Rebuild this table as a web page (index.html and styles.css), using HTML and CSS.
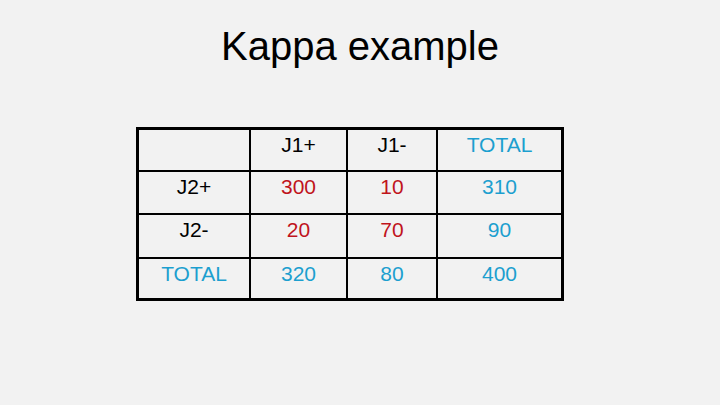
FILE: index.html
```html
<!DOCTYPE html>
<html lang="en">
<head>
<meta charset="utf-8">
<title>Kappa example</title>
<link rel="stylesheet" href="styles.css">
</head>
<body>
<main class="slide">
  <h1 class="title">Kappa example</h1>
  <div class="kappa">
    <div class="cell"></div>
    <div class="cell">J1+</div>
    <div class="cell">J1-</div>
    <div class="cell blue">TOTAL</div>

    <div class="cell">J2+</div>
    <div class="cell red">300</div>
    <div class="cell red">10</div>
    <div class="cell blue">310</div>

    <div class="cell">J2-</div>
    <div class="cell red">20</div>
    <div class="cell red">70</div>
    <div class="cell blue">90</div>

    <div class="cell blue">TOTAL</div>
    <div class="cell blue">320</div>
    <div class="cell blue">80</div>
    <div class="cell blue">400</div>
  </div>
</main>
</body>
</html>
```
FILE: styles.css
```css
html, body {
  margin: 0;
  padding: 0;
  background: #f2f2f2;
}
body {
  width: 720px;
  height: 405px;
  overflow: hidden;
  font-family: "Liberation Sans", Arial, sans-serif;
  color: #000;
}
.slide {
  display: flex;
  flex-direction: column;
  padding-top: 23px;
}
.title {
  margin: 0;
  font-weight: normal;
  font-size: 40px;
  line-height: 46px;
  text-align: center;
}
.kappa {
  margin: 58px 0 0 136px;
  display: grid;
  grid-template-columns: 110px 95px 88px 123px;
  grid-template-rows: 40px 41px 42px 39px;
  gap: 2px;
  width: max-content;
  border: 3px solid #000;
  background: #000;
}
.cell {
  background: #f2f2f2;
  display: flex;
  align-items: flex-start;
  justify-content: center;
  padding-top: 3px;
  font-size: 21px;
  line-height: 24px;
}
.red { color: #c0141c; }
.blue { color: #1c9fcf; }
```
